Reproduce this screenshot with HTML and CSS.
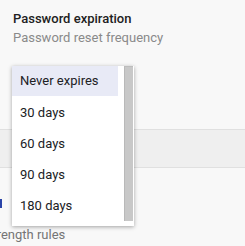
FILE: index.html
```html
<!DOCTYPE html>
<html>
<head>
    <title>Password settings</title>
    <link rel="stylesheet" href="styles.css">
</head>
<body>
    <div class="page">
        <div class="setting">
            <div class="title">Password expiration</div>
            <div class="subtitle">Password reset frequency</div>
        </div>

        <div class="band"></div>

        <div class="next">
            <div class="toggle"></div>
            <div class="next-text">Enforce strength rules</div>
        </div>

        <div class="menu">
            <ul class="options">
                <li class="selected">Never expires</li>
                <li>30 days</li>
                <li>60 days</li>
                <li>90 days</li>
                <li>180 days</li>
            </ul>
            <div class="scrollbar"></div>
        </div>
    </div>
</body>
</html>
```

FILE: styles.css
```css
html, body { margin: 0; padding: 0; }
body { background: #f8f8f8; font-family: Roboto, "Noto Sans", sans-serif; font-size: 13px; overflow: hidden; }
.page { position: relative; width: 245px; height: 246px; overflow: hidden; }
.setting { padding: 9px 13px 0; }
.title { line-height: 20px; font-weight: 500; color: #212121; }
.subtitle { line-height: 17px; color: #8a8a8a; }
.band { margin-top: 83px; height: 37px; background: #efefef; border-top: 1px solid #e0e0e0; border-bottom: 1px solid #e0e0e0; }
.next { margin-left: -62px; }
.toggle { margin-top: 31px; margin-left: 54px; width: 10px; height: 9px; background: #2a44a8; }
.next-text { margin-top: 18px; line-height: 18px; color: #757575; white-space: nowrap; }
.menu { position: absolute; left: 12px; top: 66px; width: 122px; height: 160px; background: #fff; box-shadow: 0 1px 4px rgba(0, 0, 0, 0.35); display: flex; }
.options { list-style: none; margin: 0; padding: 0; width: 106px; }
.options li { height: 31px; line-height: 31px; padding-left: 8px; color: #202124; white-space: nowrap; }
.options li.selected { background: #e8eaf6; height: 30px; line-height: 30px; margin-bottom: 1px; }
.scrollbar { margin-left: 6px; width: 8px; height: 154px; background: #c8c8c8; border-left: 1px solid #b9b9b9; border-top: 1px solid #bdbdbd; }
```
